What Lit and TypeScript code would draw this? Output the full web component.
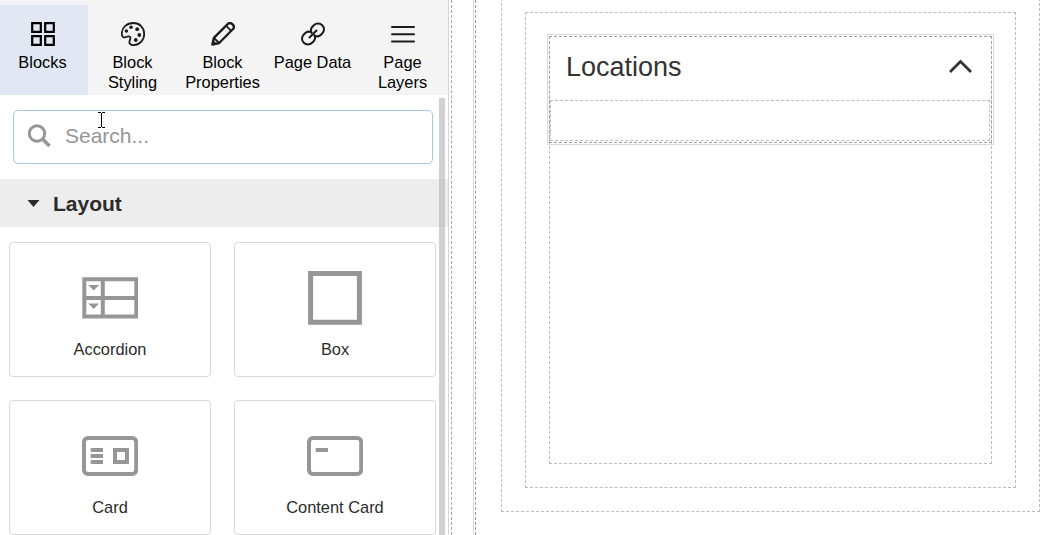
import { LitElement, html, css, svg, TemplateResult } from "lit";
import { customElement, property } from "lit/decorators.js";

const icons: Record<string, TemplateResult> = {
  blocks: svg`<g fill="none" stroke="#000" stroke-width="2.200"><path d="M1.2 1.2h8.6v8.6H1.2zM14.2 1.2h8.6v8.6h-8.6zM1.2 14.2h8.6v8.6H1.2zM14.2 14.2h8.6v8.6h-8.6z"/></g>`,
  styling: svg`<path d="M12.5 1C6 1 .9 5.3.8 11.6c0 2.900 1.300 4.300 3.200 3.700 1.900-.7 3.900-1.800 5.100-.4 1.200 1.500-1.100 3.700-.7 5.700.4 2 2.400 2.600 4.500 2.500C19 22.700 23.200 18 23.200 12 23.200 5.500 18.500 1 12.500 1z" fill="none" stroke="#1c1c1c" stroke-width="1.800"/><g fill="#1c1c1c"><circle cx="5.400" cy="9" r="1.800"/><circle cx="10" cy="5.300" r="1.800"/><circle cx="16.200" cy="7.200" r="1.900"/><circle cx="18.300" cy="13" r="1.900"/><circle cx="14.800" cy="18" r="1.900"/></g>`,
  properties: svg`<g fill="none" stroke="#1c1c1c" stroke-width="2.400" stroke-linejoin="round"><path d="M1.400 22.600L2.900 15.800 16.900 1.900c1.300-1.200 2.900-1.100 4.100 0l1 1c1.200 1.200 1.200 2.800 0 4.100L8.200 21z"/><path d="M15.200 3.800l5 5M3 16l5.200 5" stroke-width="1.800"/></g><path d="M1.200 22.800l.9-4.600 3.800 3.600z" fill="#1c1c1c"/>`,
  data: svg`<g fill="none" stroke="#1c1c1c" stroke-width="2" stroke-linecap="round"><path d="M10.300 10.200C8.400 9.400 5.700 9.600 4 11.300l-1.200 1.200c-2.400 2.400-2.400 6 0 8.300 2.300 2.400 6 2.400 8.300 0l1.300-1.300c1.800-1.800 2-4.400 1-6.400"/><path d="M13.700 13.800c1.900.8 4.600.6 6.300-1.100l1.200-1.200c2.400-2.400 2.400-6 0-8.300-2.300-2.400-6-2.400-8.300 0l-1.300 1.300c-1.800 1.800-2 4.400-1 6.400"/><path d="M8.500 15.500l7-7"/></g>`,
  layers: svg`<path d="M1 5h22M1 12.300h22M1 19.600h22" stroke="#1c1c1c" stroke-width="2" stroke-linecap="round"/>`,
  accordion: svg`<g fill="none" stroke="#969696" stroke-width="4"><path d="M2.300 9.300h52v37.200h-52zM2.300 28h52M20.800 9.300v37"/></g><path d="M6.300 15h10.800l-5.400 5.600zM6.300 33.500h10.800l-5.400 5.600z" fill="#969696"/>`,
  box: svg`<path d="M3.600 3.400h48.800v48.800H3.600z" fill="none" stroke="#969696" stroke-width="5"/>`,
  card: svg`<rect x="2" y="10" width="52.200" height="36" rx="4" fill="none" stroke="#969696" stroke-width="4"/><path d="M8.700 22h12.300M8.700 28h12.300M8.700 34h12.300" stroke="#969696" stroke-width="4"/><path d="M33 22h12v12H33z" fill="none" stroke="#969696" stroke-width="4"/>`,
  content: svg`<rect x="2" y="10" width="52.200" height="36" rx="4" fill="none" stroke="#969696" stroke-width="4"/><path d="M8.700 22h12.300" stroke="#969696" stroke-width="4"/>`,
};

@customElement("panel-tab")
class PanelTab extends LitElement {
  @property() icon = "";
  @property() label = "";
  static styles = css`
    :host { display: flex; flex-direction: column; align-items: center; width: 90px; flex: none; box-sizing: border-box; padding: 17px 0 0 0; color: #000; }
    :host([active]) { background: #e1e8f3; }
    svg { display: block; width: 24px; height: 24px; }
    .label { margin: 6px 1px 0 0; line-height: 20px; text-align: center; white-space: pre; }
  `;
  render() {
    return html`<svg viewBox="0 0 24 24">${icons[this.icon]}</svg><span class="label">${this.label}</span>`;
  }
}

@customElement("block-card")
class BlockCard extends LitElement {
  @property() icon = "";
  @property() label = "";
  static styles = css`
    :host { display: flex; flex-direction: column; align-items: center; box-sizing: border-box; height: 135px; border: 1px solid #d9d9d9; border-radius: 4px; padding-top: 27px; background: #fff; color: #2b2b2b; }
    svg { display: block; width: 56px; height: 56px; }
    .label { margin-top: 13px; line-height: 20px; }
  `;
  render() {
    return html`<svg viewBox="0 0 56 56">${icons[this.icon]}</svg><span class="label">${this.label}</span>`;
  }
}

@customElement("app-root")
class AppRoot extends LitElement {
  static styles = css`
    :host { display: flex; position: relative; width: 1057px; height: 535px; overflow: hidden; background: #fff; font: 16.4px "Liberation Sans", Arial, sans-serif; }
    * { box-sizing: border-box; }
    .panel { position: relative; width: 449px; flex: none; border-right: 1px solid #d6d6d6; overflow: hidden; }
    .tabs { display: flex; height: 95px; padding-top: 5px; background: #f4f4f4; }
    .tabs panel-tab:first-child { margin-left: -2px; }
    .search { display: flex; align-items: center; height: 54px; width: 420px; margin: 15px 0 0 13px; padding: 0 0 2px 13px; border: 1px solid #a5c8e1; border-radius: 5px; color: #969696; font-size: 21px; }
    .search svg { width: 24px; height: 24px; margin-right: 14px; }
    .section { display: flex; align-items: center; height: 48px; margin-top: 15px; padding: 1px 0 0 27px; background: #ededed; color: #2b2b2b; font-size: 21px; font-weight: bold; }
    .section svg { width: 13px; height: 7px; margin-right: 13px; }
    .grid { display: grid; grid-template-columns: 202px 202px; gap: 23px; padding: 15px 0 0 9px; }
    .thumb { position: absolute; left: 439px; top: 98px; width: 6px; height: 437px; background: rgba(187, 187, 187, 0.68); }
    .cursor { position: absolute; left: 97px; top: 112px; width: 8px; height: 16px; }
    .page { flex: 1; margin-left: 2px; padding-left: 21px; border-left: 1px dashed #a6a6a6; }
    .frame { height: 100%; padding-left: 1px; border-left: 1px solid #d9d9d9; }
    .body { display: flow-root; height: 100%; border-left: 1px dashed #999; padding-left: 25px; }
    .zone { border: 1px dashed #bdbdbd; padding: 23px; }
    .outer { width: 539px; height: 524px; margin-top: -12px; }
    .middle, .inner { height: 100%; }
    .inner { padding: 0; }
    .accordion { height: 107px; margin: -1px; border: 1px dashed #a0a0a0; outline: 1px solid #d9d9d9; outline-offset: 1px; }
    .head { display: flex; align-items: center; justify-content: space-between; height: 63px; padding: 0 18px 4px 16px; color: #333; font-size: 27px; }
    .title { padding-top: 2px; }
    .head svg { width: 25px; height: 15px; }
    .drop { width: 440px; height: 41px; border: 1px dashed #bdbdbd; }
  `;
  render() {
    return html`
      <div class="panel">
        <div class="tabs">
          <panel-tab active icon="blocks" label="Blocks"></panel-tab>
          <panel-tab icon="styling" label=${"Block\nStyling"}></panel-tab>
          <panel-tab icon="properties" label=${"Block\nProperties"}></panel-tab>
          <panel-tab icon="data" label="Page Data"></panel-tab>
          <panel-tab icon="layers" label=${"Page\nLayers"}></panel-tab>
        </div>
        <div class="search">
          <svg viewBox="0 0 24 24" fill="none" stroke="#969696" stroke-width="3"><circle cx="10" cy="9.500" r="7.700"/><path d="M15.500 15l7 7" stroke-width="3.600"/></svg>
          <span>Search...</span>
        </div>
        <div class="section">
          <svg viewBox="0 0 13 7"><path d="M.5 0h12L6.500 7z" fill="#2b2b2b"/></svg>
          <span>Layout</span>
        </div>
        <div class="grid">
          <block-card icon="accordion" label="Accordion"></block-card>
          <block-card icon="box" label="Box"></block-card>
          <block-card icon="card" label="Card"></block-card>
          <block-card icon="content" label="Content Card"></block-card>
        </div>
        <div class="thumb"></div>
        <svg class="cursor" viewBox="0 0 8 16"><path d="M1 .5h3M5 .5h3M4.500 1v14M1 15.500h3M5 15.500h3" stroke="#000" fill="none"/></svg>
      </div>
      <div class="page"><div class="frame"><div class="body">
        <div class="zone outer"><div class="zone middle"><div class="zone inner">
          <div class="accordion">
            <div class="head">
              <span class="title">Locations</span>
              <svg viewBox="0 0 25 15"><path d="M2 13L12.500 2.500 23 13" fill="none" stroke="#333" stroke-width="2.800"/></svg>
            </div>
            <div class="drop"></div>
          </div>
        </div></div></div>
      </div></div></div>
    `;
  }
}
